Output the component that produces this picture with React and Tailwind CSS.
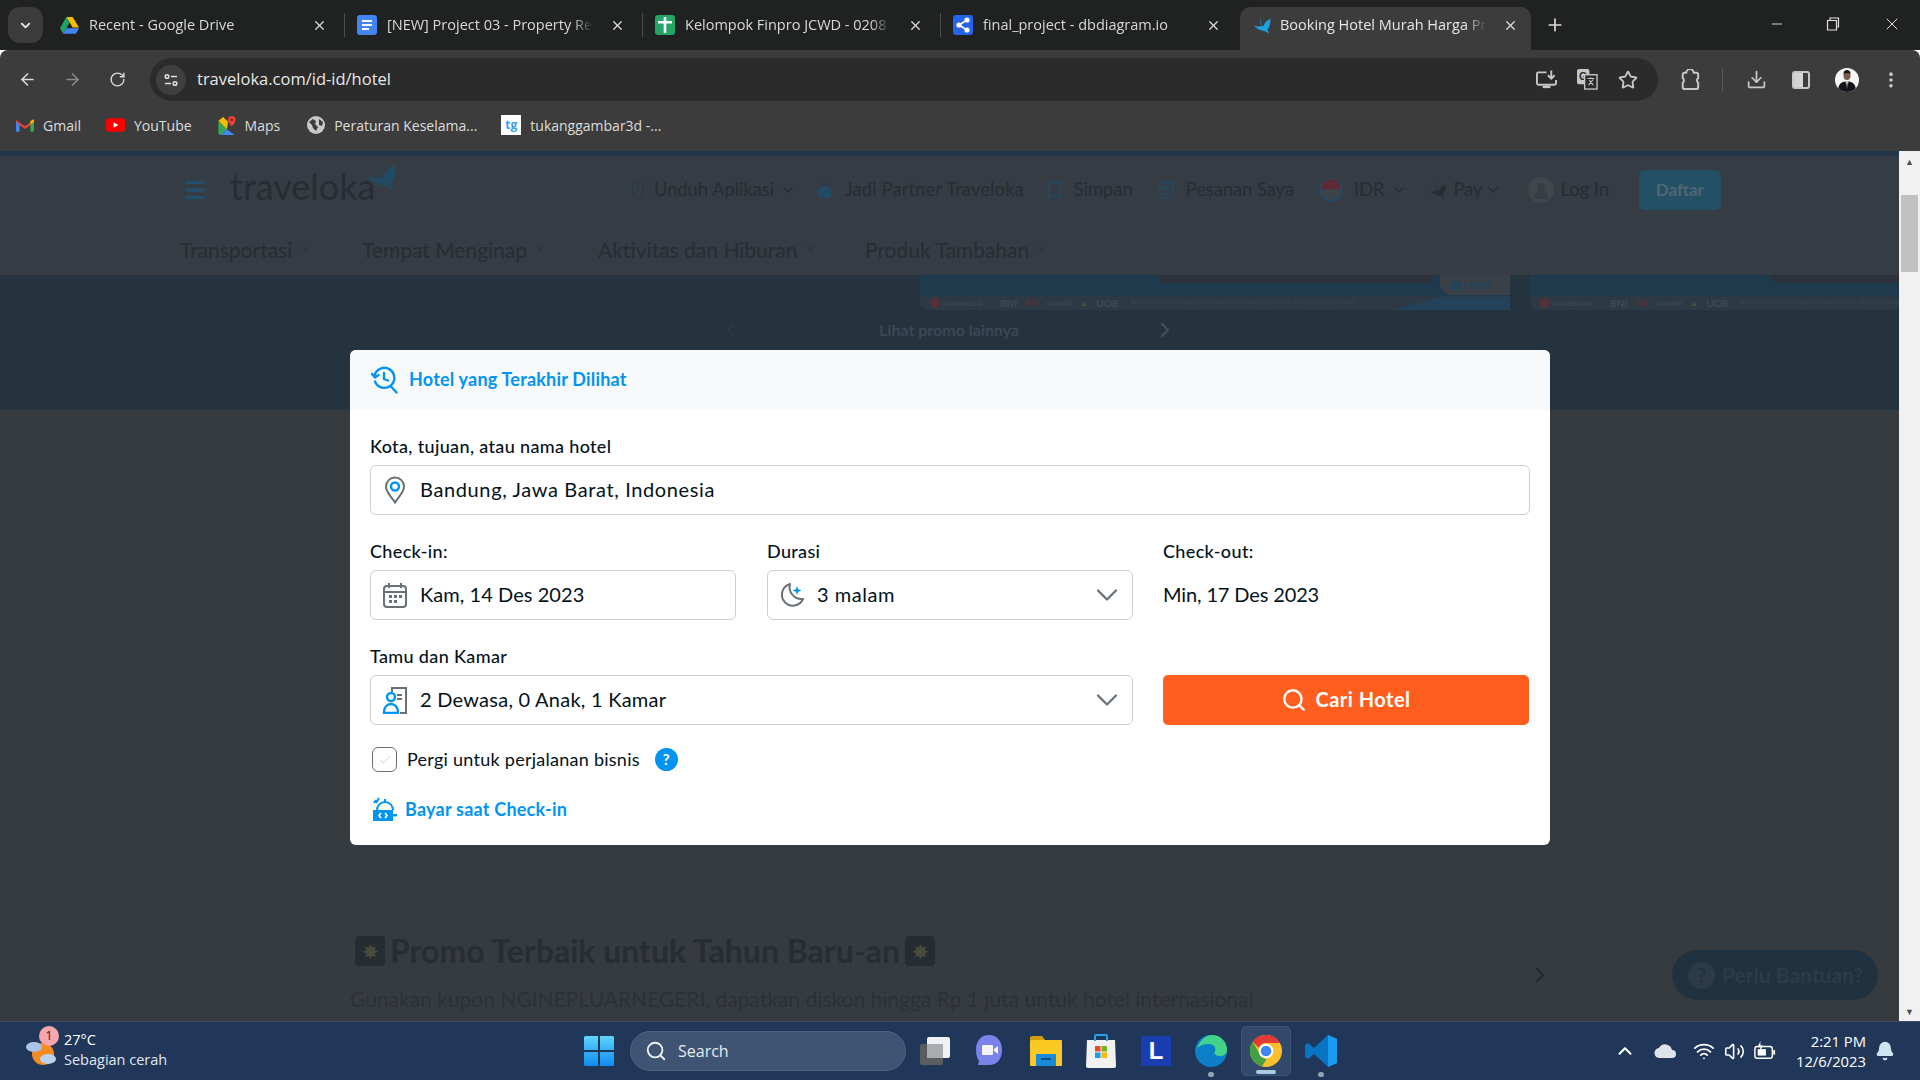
import React from "react";
import { X, Plus, ArrowLeft, ArrowRight, RotateCw, Star, Download, EllipsisVertical, ChevronDown, ChevronUp, ChevronRight, ChevronLeft, Minus, Search, Wifi, Volume2, Bell, Menu, Check } from "lucide-react";

const ui = "font-['Open_Sans',sans-serif]";
const tv = "font-['Lato',sans-serif]";

const Bird = ({ className, fill }) => (
  <svg viewBox="0 0 28 26" className={className}>
    <path fill={fill} d="M11 0C10 6 11 11 15 15C17 9 21 5 27 2C27 10 26 16 22 20L25 26L17 22C11 22 5 19 0 13C5 15 9 15 13 14C10 10 9 5 11 0Z" />
  </svg>
);
const DriveIcon = () => (
  <svg viewBox="0 0 24 22" className="w-[19px] h-[18px] shrink-0">
    <path fill="#fbbc04" d="M8 1h8l8 13h-8z" />
    <path fill="#1fa463" d="M8 1L0 15l4 7 8-14z" />
    <path fill="#4285f4" d="M8 15h16l-4 7H4z" />
  </svg>
);
const DocIcon = ({ color, children }) => (
  <svg viewBox="0 0 20 20" className="w-[20px] h-[20px] shrink-0">
    <rect width="20" height="20" rx="3" fill={color} />
    {children}
  </svg>
);
const Tab = ({ icon, text, active }) => (
  <div className={`h-[43px] flex items-center pl-[11px] pb-[7px] shrink-0 ${active ? "bg-[#3c3c3c] rounded-t-[10px] w-[291px] ml-[2px] pr-[13px]" : "w-[297px] pr-[17px]"}`}>
    <div className="w-[22px] flex justify-center shrink-0">{icon}</div>
    <div className={`w-[206px] overflow-hidden whitespace-nowrap text-[14.5px] [mask-image:linear-gradient(to_right,black_90%,transparent)] ${active ? "ml-[7px] text-[#e6e6e6]" : "ml-[9px] text-[#d8d8d8]"}`}>{text}</div>
    <X className="ml-auto text-[#dcdcdc]" size={15} strokeWidth={2} />
  </div>
);
const Sep = () => <div className="w-px h-[24px] bg-[#4a4d4f] shrink-0 -mt-[7px]" />;

const Bookmark = ({ icon, text, ml }) => (
  <div className={`flex items-center gap-[9px] ${ml}`}>
    {icon}
    <span className="text-[14px] text-[#dcdcdc] whitespace-nowrap">{text}</span>
  </div>
);

const HeadItem = ({ icon, text, ml, chevron, gap = "gap-[12px]", track = "" }) => (
  <div className={`flex items-center ${gap} ${ml} text-[#272d33] text-[18.3px] ${track}`}>
    {icon}
    <span className="whitespace-nowrap">{text}</span>
    {chevron && <ChevronDown size={16} className="text-[#272d33] -ml-[4px]" />}
  </div>
);
const NavItem = ({ text, w }) => (
  <div className={`flex items-center ${w} shrink-0 text-[21px] text-[#272d33]`}>
    <span className="whitespace-nowrap">{text}</span>
    <span className="ml-[8px] text-[10px] text-[#2f3539]">▼</span>
  </div>
);

const Field = ({ icon, text, chevron, className, track }) => (
  <div className={`h-[50px] rounded-[6px] border border-[#cdd0d1] flex items-center pl-[9px] pr-[7px] bg-white ${className}`}>
    <div className="w-[30px] h-[30px] flex items-center justify-center shrink-0">{icon}</div>
    <span className={`ml-[10px] pb-[2px] text-[20px] text-[#03121a] whitespace-nowrap ${track}`}>{text}</span>
    {chevron && <ChevronDown className="ml-auto text-[#687176]" size={36} strokeWidth={1.5} />}
  </div>
);
const Label = ({ children }) => <div className="text-[18px] tracking-[0.35px] font-medium text-[#03121a] h-[22px] leading-[20px] whitespace-nowrap">{children}</div>;

const Logos = ({ wide }) => (
  <div className="h-[14px] bg-[#2d3a45] flex items-center pl-[10px] gap-[8px] text-[8px] text-[#3f4a53] whitespace-nowrap overflow-hidden">
    <span className="w-[10px] h-[10px] rounded-full bg-[#54303a] shrink-0 -mr-[5px]" />
    <span>mastercard</span><span className="ml-[10px] font-bold text-[10px]">BNI</span><span className="text-[#54303a] font-bold">BRI</span><span>mandiri</span><span className="text-[#4f4f3c] font-bold">▲</span><span className="font-bold text-[10px]">UOB</span>
    {wide && <span className="ml-[4px] text-[5px] text-[#3c4650]">Berlaku untuk transaksi dengan kartu kredit dan kartu debit yang terdaftar dalam program promo hotel</span>}
  </div>
);

export default function App() {
  return (
    <div className={`w-[1920px] h-[1080px] overflow-hidden flex flex-col ${ui}`}>
      {/* tab strip */}
      <div className="h-[50px] bg-[#202222] flex items-end shrink-0 relative">
        <div className="w-[35px] h-[36px] ml-[8px] mb-[7px] rounded-[12px] bg-[#3c3c3c] flex items-center justify-center shrink-0">
          <ChevronDown size={15} strokeWidth={3} className="text-[#e8e8e8]" />
        </div>
        <div className="flex items-center ml-[4px]">
          <Tab text="Recent - Google Drive" icon={<DriveIcon />} />
          <Sep />
          <Tab text="[NEW] Project 03 - Property Rental" icon={<DocIcon color="#4285f4"><path fill="#fff" d="M5 5h10v2H5zM5 9h10v2H5zM5 13h7v2H5z" /></DocIcon>} />
          <Sep />
          <Tab text="Kelompok Finpro JCWD - 0208 - Sheet" icon={<DocIcon color="#23a566"><path fill="#fff" d="M3 6h14v2.500H3zM8.700 2h2.600v16H8.700z" /></DocIcon>} />
          <Sep />
          <Tab text="final_project - dbdiagram.io" icon={<DocIcon color="#2563eb"><g fill="#fff"><circle cx="14" cy="5" r="2.600" /><circle cx="6" cy="10" r="2.600" /><circle cx="14" cy="15" r="2.600" /></g><path stroke="#fff" strokeWidth="1.600" d="M14 5L6 10L14 15" fill="none" /></DocIcon>} />
          <Tab active text="Booking Hotel Murah Harga Promo" icon={<Bird className="w-[17px] h-[17px]" fill="#1ba0e2" />} />
        </div>
        <Plus size={20} strokeWidth={2} className="text-[#dcdcdc] ml-[14px] mb-[15px]" />
        <div className="ml-auto flex items-center mb-[16px] text-[#e0e0e0]">
          <Minus size={16} strokeWidth={1.4} />
          <svg viewBox="0 0 14 14" className="w-[14px] h-[14px] ml-[41px]"><path fill="none" stroke="#e0e0e0" strokeWidth="1.2" d="M1.500 3.500h9v9.500h-9zM4 3.500V1h8.500v9H10.500" /></svg>
          <X size={20} strokeWidth={1.2} className="ml-[42px] mr-[18px]" />
        </div>
      </div>
      {/* toolbar */}
      <div className="h-[101px] bg-[#3c3c3c] shrink-0 rounded-tl-[8px] rounded-tr-[8px] flex flex-col">
        <div className="h-[51px] pt-[8px] flex items-start">
          <div className="flex items-center h-[43px] pl-[18px] text-[#d8d8d8]">
            <ArrowLeft size={19} strokeWidth={2} />
            <ArrowRight size={19} strokeWidth={2} className="ml-[26px] text-[#8a8a8a]" />
            <RotateCw size={17} strokeWidth={2} className="ml-[27px]" />
          </div>
          <div className="ml-[24px] w-[1508px] h-[43px] rounded-full bg-[#2b2b2b] flex items-center pl-[6px] pr-[20px]">
            <div className="w-[30px] h-[30px] rounded-full bg-[#3f3f3f] flex items-center justify-center">
              <svg viewBox="0 0 16 16" className="w-[16px] h-[16px]"><g fill="none" stroke="#e0e0e0" strokeWidth="1.500"><circle cx="4" cy="4.500" r="1.800" /><path d="M8 4.500h6M2 11.500h6" /><circle cx="12" cy="11.500" r="1.800" /></g></svg>
            </div>
            <span className="ml-[11px] text-[16.5px] text-[#e8e8e8]">traveloka.com/id-id/hotel</span>
            <div className="ml-auto flex items-center gap-[20px] text-[#c7c7c7]">
              <svg viewBox="0 0 22 20" className="w-[21px] h-[20px]"><path fill="none" stroke="#c7c7c7" strokeWidth="2" d="M11 2H2.500A1.500 1.500 0 0 0 1 3.500v10A1.500 1.500 0 0 0 2.500 15h17a1.500 1.500 0 0 0 1.500-1.500V10" /><path fill="none" stroke="#c7c7c7" strokeWidth="2" d="M16 0v8M12.500 5l3.500 3.500L19.500 5" /><rect x="7" y="16" width="8" height="2.500" fill="#c7c7c7" /></svg>
              <svg viewBox="0 0 22 22" className="w-[21px] h-[21px]"><rect x="0" y="0" width="13" height="16" rx="2" fill="#c7c7c7" /><text x="2" y="12" fontSize="11" fontWeight="700" fontFamily="Liberation Sans, sans-serif" fill="#2b2b2b">G</text><rect x="8" y="6" width="13" height="15" fill="#2b2b2b" stroke="#c7c7c7" strokeWidth="1.400" /><path d="M11 10h7M14.500 9v1.500M12 17l5-6M13 12l4 5" stroke="#c7c7c7" strokeWidth="1.200" fill="none" /></svg>
              <Star size={20} strokeWidth={2.2} />
            </div>
          </div>
          <div className="flex items-center h-[43px] text-[#c7c7c7]">
            <svg viewBox="0 0 22 24" className="w-[20px] h-[22px] ml-[22px]"><path fill="none" stroke="#c7c7c7" strokeWidth="2.200" strokeLinejoin="round" d="M7 4a4 4 0 0 1 8 0h3a2 2 0 0 1 2 2v4a3 3 0 0 0 0 5v5a2 2 0 0 1-2 2H5a2 2 0 0 1-2-2v-5a3 3 0 0 0 0-5V6a2 2 0 0 1 2-2z" /></svg>
            <div className="w-px h-[22px] bg-[#5a5a5a] ml-[22px]" />
            <Download size={21} strokeWidth={2} className="ml-[23px]" />
            <svg viewBox="0 0 18 18" className="w-[18px] h-[18px] ml-[25px]"><rect x="1" y="1" width="16" height="16" rx="2" fill="none" stroke="#c7c7c7" strokeWidth="2" /><rect x="2" y="2" width="9" height="14" fill="#d4d4d4" /></svg>
            <svg viewBox="0 0 24 24" className="w-[24px] h-[24px] ml-[25px]"><defs><clipPath id="av"><circle cx="12" cy="12" r="12" /></clipPath></defs><g clipPath="url(#av)"><rect width="24" height="24" fill="#f6f6f6" /><ellipse cx="12" cy="7.500" rx="3.500" ry="4.500" fill="#7a5a4c" /><path d="M8.500 6c0-3 1.500-4 3.500-4s3.500 1 3.500 4c-2-1.500-5-1.500-7 0z" fill="#1c1614" /><path d="M3 24c0-8 3-10.500 9-10.500S21 16 21 24z" fill="#14131c" /><path d="M10.500 13.500h3l-1.500 7z" fill="#f6f6f6" /><path d="M11.600 14.500h.8l.3 5-.7 1-.7-1z" fill="#2a2030" /></g></svg>
            <EllipsisVertical size={20} strokeWidth={2.4} className="ml-[22px]" />
          </div>
        </div>
        <div className="h-[50px] flex items-center pl-[16px] pb-[2px]">
          <Bookmark text="Gmail" icon={<svg viewBox="0 0 20 15" className="w-[18px] h-[14px]"><path fill="#ea4335" d="M0 2l10 7 10-7v3L10 12 0 5z" /><path fill="#4285f4" d="M0 4l4 3v8H1a1 1 0 0 1-1-1z" /><path fill="#34a853" d="M20 4l-4 3v8h3a1 1 0 0 0 1-1z" /><path fill="#fbbc04" d="M16 3l4-2v3l-4 3z" /></svg>} />
          <Bookmark ml="ml-[25px]" text="YouTube" icon={<svg viewBox="0 0 20 14" className="w-[19px] h-[14px]"><rect width="20" height="14" rx="3" fill="#f00" /><path fill="#fff" d="M8 4l5 3-5 3z" /></svg>} />
          <Bookmark ml="ml-[26px]" text="Maps" icon={<svg viewBox="0 0 18 20" className="w-[18px] h-[19px]"><path fill="#34a853" d="M0 5l9 9-7 6-2-1z" /><path fill="#4285f4" d="M9 14l8 6H2z" /><path fill="#fbbc04" d="M0 5l5-4 5 5-1 8z" /><path fill="#ea4335" d="M14 0a4 4 0 0 1 4 4c0 3-4 7-4 7s-4-4-4-7a4 4 0 0 1 4-4z" /><circle cx="14" cy="4" r="1.300" fill="#7c1a12" /></svg>} />
          <Bookmark ml="ml-[27px]" text="Peraturan Keselama..." icon={<svg viewBox="0 0 18 18" className="w-[18px] h-[18px]"><circle cx="9" cy="9" r="9" fill="#c8c8c8" /><path fill="#3c3c3c" d="M2 6l4-3 3 2-1 3 3 3-2 4-3-3-1-3zM12 3l4 3-1 4-3-1z" /></svg>} />
          <Bookmark ml="ml-[24px]" text="tukanggambar3d -..." icon={<div className="w-[20px] h-[20px] bg-white flex items-center justify-center text-[12px] font-bold text-[#3aa0e8] leading-none">tg</div>} />
        </div>
      </div>

      {/* viewport */}
      <div className="flex-1 flex relative overflow-hidden bg-[#363b40]">
        <div className="w-[1899px] shrink-0 flex flex-col overflow-hidden">
          <div className="h-[5px] bg-[#223649] shrink-0" />
          <div className={`bg-[#363c43] shrink-0 ${tv}`}>
            <div className="h-[68px] flex items-center pl-[184px]">
              <Menu size={26} strokeWidth={3} className="text-[#244d69] -ml-[2px]" />
              <div className="ml-[22px] relative w-[170px] h-[44px] -mt-[6px]">
                <span className="text-[36px] leading-[42px] text-[#272d33]">traveloka</span>
                <Bird className="absolute left-[137px] -top-[3px] w-[30px] h-[28px]" fill="#234a63" />
              </div>
              <HeadItem ml="ml-[232px]" gap="gap-[10px]" chevron text="Unduh Aplikasi" icon={<svg viewBox="0 0 12 18" className="w-[12px] h-[18px]"><rect x="1" y="1" width="10" height="16" rx="2" fill="none" stroke="#2a3a48" strokeWidth="1.500" /><path d="M6 4v6" stroke="#2a3a48" strokeWidth="2" /></svg>} />
              <HeadItem ml="ml-[19px]" gap="gap-[10px]" track="tracking-[0.17px]" text="Jadi Partner Traveloka" icon={<svg viewBox="0 0 20 20" className="w-[20px] h-[20px]"><path fill="#234a63" d="M10 5l8 5-3 8H5l-3-8z" /><path stroke="#2a3a48" strokeWidth="1.500" d="M6 4l2 2M10 2v3M14 4l-2 2" /></svg>} />
              <HeadItem ml="ml-[24px]" text="Simpan" icon={<svg viewBox="0 0 14 18" className="w-[14px] h-[18px]"><path d="M1 1h12v16l-6-4-6 4z" fill="none" stroke="#234a63" strokeWidth="1.500" /><path d="M4 6l5 4M9 6l-5 4" stroke="#2a3a48" strokeWidth="1.200" /></svg>} />
              <HeadItem ml="ml-[26px]" text="Pesanan Saya" icon={<svg viewBox="0 0 16 18" className="w-[15px] h-[18px]"><rect x="1" y="1" width="14" height="16" rx="1.500" fill="none" stroke="#234a63" strokeWidth="1.500" /><path d="M1 6h14M4 9h8M4 13h8" stroke="#234a63" strokeWidth="1.500" /></svg>} />
              <HeadItem ml="ml-[25px]" gap="gap-[11px]" chevron text="IDR" icon={<svg viewBox="0 0 24 24" className="w-[24px] h-[24px]"><circle cx="12" cy="12" r="11" fill="#3e4249" stroke="#234a63" strokeWidth="2" /><path d="M2 11a10 10 0 0 1 20 0z" fill="#5f2a35" /></svg>} />
              <HeadItem ml="ml-[23px]" gap="gap-[7px]" chevron text="Pay" icon={<Bird className="w-[16px] h-[17px]" fill="#272d33" />} />
              <HeadItem ml="ml-[27px]" gap="gap-[6px]" text="Log In" icon={<svg viewBox="0 0 26 26" className="w-[26px] h-[26px]"><circle cx="13" cy="13" r="13" fill="#41464c" /><circle cx="13" cy="10" r="4" fill="#383d42" /><path d="M6 22c0-6 3-8 7-8s7 2 7 8z" fill="#383d42" /></svg>} />
              <div className="ml-[30px] w-[82px] h-[40px] rounded-[6px] bg-[#245066] flex items-center justify-center text-[17px] font-bold text-[#4f6675]">Daftar</div>
            </div>
            <div className="h-[51px] flex items-center pl-[180px]">
              <NavItem text="Transportasi" w="w-[182px]" />
              <NavItem text="Tempat Menginap" w="w-[236px]" />
              <NavItem text="Aktivitas dan Hiburan" w="w-[267px]" />
              <NavItem text="Produk Tambahan" w="w-[200px]" />
            </div>
          </div>
          {/* banner */}
          <div className={`h-[135px] bg-[#25333f] shrink-0 flex flex-col ${tv}`}>
            <div className="h-[35px] flex pl-[920px] gap-[20px]">
              <div className="w-[590px] h-full rounded-bl-[8px] bg-[#203a4d] flex flex-col overflow-hidden relative">
                <div className="h-[21px] relative">
                  <div className="absolute left-[239px] top-0 w-[275px] h-[8px] rounded-b-[8px] bg-[#2c313b]" />
                </div>
                <Logos wide />
                <div className="absolute left-[474px] top-0 w-[116px] h-[35px] bg-[#24425a] [clip-path:polygon(0_100%,40%_62%,100%_62%,100%_100%)]" />
                <div className="absolute left-[520px] top-0 w-[70px] h-[20px] rounded-bl-[12px] bg-[#3a4047] flex items-center pl-[10px] text-[11px] font-bold text-[#23455c]">▦ Hotel</div>
              </div>
              <div className="flex-1 h-full rounded-bl-[8px] bg-[#203a4d] flex flex-col overflow-hidden relative">
                <div className="h-[21px] relative">
                  <div className="absolute left-[240px] top-0 w-[130px] h-[8px] rounded-bl-[8px] bg-[#2c313b]" />
                </div>
                <Logos wide />
              </div>
            </div>
            <div className="flex items-center h-[38px] mt-[1px] pl-[720px]">
              <ChevronLeft size={22} className="text-[#2a3946]" />
              <span className="ml-[137px] text-[16px] font-bold text-[#3a4854] whitespace-nowrap">Lihat promo lainnya</span>
              <ChevronRight size={24} className="ml-[134px] text-[#45525c]" />
            </div>
          </div>
          {/* promo */}
          <div className={`pl-[350px] pt-[516px] shrink-0 ${tv}`}>
            <div className="flex items-center gap-[5px] h-[50px]">
              <div className="ml-[5px] w-[30px] h-[30px] rounded-[4px] bg-[#272c32] flex items-center justify-center text-[#4a4b3a] text-[20px] leading-none">✸</div>
              <span className="text-[32px] font-bold text-[#272d33] whitespace-nowrap">Promo Terbaik untuk Tahun Baru-an</span>
              <div className="w-[30px] h-[30px] rounded-[4px] bg-[#272c32] flex items-center justify-center text-[#4a4b3a] text-[20px] leading-none">✸</div>
            </div>
            <div className="mt-[9px] text-[21px] leading-[28px] text-[#2c3136] whitespace-nowrap">Gunakan kupon NGINEPLUARNEGERI, dapatkan diskon hingga Rp 1 juta untuk hotel internasional</div>
          </div>
        </div>
        {/* scrollbar */}
        <div className="w-[21px] shrink-0 bg-[#f1f1f1] flex flex-col items-center">
          <div className="h-[20px] flex items-center justify-center text-[9px] text-[#505050] leading-none">▲</div>
          <div className="mt-[24px] w-[17px] h-[77px] bg-[#c1c1c1]" />
          <div className="mt-auto h-[20px] flex items-center justify-center text-[9px] text-[#505050] leading-none">▼</div>
        </div>

        {/* floating */}
        <ChevronRight size={26} strokeWidth={2} className="absolute left-[1527px] top-[811px] text-[#22272c]" />
        <div className={`absolute left-[1672px] top-[799px] w-[206px] h-[50px] rounded-full bg-[#203240] flex items-center pl-[16px] ${tv}`}>
          <div className="w-[27px] h-[27px] rounded-full bg-[#2c3b47] flex items-center justify-center text-[20px] font-bold text-[#203240] shrink-0">?</div>
          <span className="ml-[7px] text-[21px] font-bold text-[#2d3b47] whitespace-nowrap">Perlu Bantuan?</span>
        </div>

        {/* modal */}
        <div className={`absolute left-[350px] top-[199px] w-[1200px] h-[495px] rounded-[6px] bg-white overflow-hidden ${tv}`}>
          <div className="h-[60px] bg-[#f7f9fb] flex items-center pl-[21px] pb-[1px]">
            <svg viewBox="0 0 28 28" className="w-[28px] h-[28px]">
              <g fill="none" stroke="#0194f3" strokeWidth="2.400" strokeLinecap="round" strokeLinejoin="round">
                <path d="M3.600 9.500A10 10 0 1 1 4 15.500" />
                <path d="M1 8l3 3.500L7.500 9" />
                <path d="M13 7v6l4 1.500" />
                <path d="M19.500 20l6 6.500" />
              </g>
            </svg>
            <span className="ml-[10px] text-[18px] tracking-[0.2px] font-bold text-[#0194f3] whitespace-nowrap">Hotel yang Terakhir Dilihat</span>
          </div>
          <div className="px-[20px] pt-[26px] flex flex-col">
            <Label>Kota, tujuan, atau nama hotel</Label>
            <Field className="mt-[7px]" track="tracking-[0.63px]" text="Bandung, Jawa Barat, Indonesia" icon={
              <svg viewBox="0 0 24 28" className="w-[24px] h-[28px]"><path d="M12 1.500a9 9 0 0 1 9 9c0 6-6 11-9 16-3-5-9-10-9-16a9 9 0 0 1 9-9z" fill="none" stroke="#687176" strokeWidth="2" /><circle cx="12" cy="10.500" r="4" fill="none" stroke="#0194f3" strokeWidth="2.400" /></svg>
            } />
            <div className="mt-[26px] flex">
              <div className="w-[366px] shrink-0">
                <Label>Check-in:</Label>
                <Field className="mt-[7px]" track="tracking-[0.06px]" text="Kam, 14 Des 2023" icon={
                  <svg viewBox="0 0 26 26" className="w-[26px] h-[26px]"><rect x="2" y="4" width="22" height="21" rx="3" fill="none" stroke="#687176" strokeWidth="2" /><path d="M2 10h22" stroke="#687176" strokeWidth="2" /><path d="M7 1v5M19 1v5" stroke="#687176" strokeWidth="2" /><g fill="#687176"><rect x="7" y="13" width="3" height="3" /><rect x="12" y="13" width="3" height="3" /><rect x="17" y="13" width="3" height="3" /><rect x="7" y="18" width="3" height="3" /><rect x="12" y="18" width="3" height="3" /></g></svg>
                } />
              </div>
              <div className="w-[366px] ml-[31px] shrink-0">
                <Label>Durasi</Label>
                <Field className="mt-[7px]" track="tracking-[0.55px]" chevron text="3 malam" icon={
                  <svg viewBox="0 0 26 26" className="w-[26px] h-[26px]"><path d="M11 2a11 11 0 1 0 13 15 12 12 0 0 1-13-15z" fill="none" stroke="#687176" strokeWidth="2" strokeLinejoin="round" /><path d="M18 4l1.200 3.300L22.500 8.500l-3.300 1.200L18 13l-1.200-3.300L13.500 8.500l3.300-1.200z" fill="#0194f3" /></svg>
                } />
              </div>
              <div className="ml-[30px]">
                <Label>Check-out:</Label>
                <div className="mt-[7px] h-[50px] pb-[2px] flex items-center text-[20px] tracking-[-0.13px] text-[#03121a] whitespace-nowrap">Min, 17 Des 2023</div>
              </div>
            </div>
            <div className="mt-[26px] grid grid-cols-[763px_366px] gap-x-[30px]">
              <div>
                <Label>Tamu dan Kamar</Label>
                <Field className="mt-[7px]" track="tracking-[0.25px]" chevron text="2 Dewasa, 0 Anak, 1 Kamar" icon={
                  <svg viewBox="0 0 26 28" className="w-[26px] h-[28px]"><path d="M10 6V2h14v25h-6" fill="none" stroke="#687176" strokeWidth="2" /><path d="M15 9h5M15 13h5" stroke="#687176" strokeWidth="2" /><circle cx="9" cy="11" r="4" fill="none" stroke="#0194f3" strokeWidth="2.400" /><path d="M2 27c0-6 3-9 7-9s7 3 7 9z" fill="none" stroke="#0194f3" strokeWidth="2.400" /></svg>
                } />
              </div>
              <div className="pt-[29px]">
                <div className="h-[50px] rounded-[5px] bg-[#ff5e1f] flex items-center justify-center gap-[8px] text-white text-[20px] tracking-[0.5px] font-bold">
                  <Search size={26} strokeWidth={2.2} />
                  <span className="pb-[2px]">Cari Hotel</span>
                </div>
              </div>
            </div>
            <div className="mt-[22px] flex items-center h-[25px] pl-[2px]">
              <div className="w-[25px] h-[25px] rounded-[6px] border border-[#687176] flex items-center justify-center">
                <Check size={14} strokeWidth={1.6} className="text-[#cdd0d1]" />
              </div>
              <span className="ml-[10px] text-[18px] tracking-[0.26px] text-[#03121a] whitespace-nowrap">Pergi untuk perjalanan bisnis</span>
              <div className="ml-[15px] w-[23px] h-[23px] rounded-full bg-[#0194f3] flex items-center justify-center text-white font-bold text-[15px] leading-none">?</div>
            </div>
            <div className="mt-[24px] flex items-center h-[26px] pl-[2px]">
              <svg viewBox="0 0 26 26" className="w-[26px] h-[26px] shrink-0">
                <g fill="none" stroke="#0194f3" strokeWidth="2">
                  <path d="M5 14a8 8 0 0 1 16 0" />
                  <path d="M13 6V3" />
                  <path d="M4 4l-2 3M7 2L4 7" />
                </g>
                <rect x="1" y="14" width="20" height="11" fill="#0194f3" />
                <rect x="21" y="18" width="4" height="2.400" fill="#0194f3" />
                <path d="M9 17l-2 2.500L9 22M13 17l2 2.500L13 22" stroke="#fff" strokeWidth="1.600" fill="none" />
              </svg>
              <span className="ml-[7px] text-[18px] tracking-[0.22px] font-bold text-[#0194f3] whitespace-nowrap">Bayar saat Check-in</span>
            </div>
          </div>
        </div>
      </div>

      {/* taskbar */}
      <div className="h-[59px] bg-[#20375a] border-t border-[#3d4c60] shrink-0 flex items-center text-white relative">
        <div className="w-[584px] flex items-center pl-[24px] shrink-0">
          <div className="relative w-[34px] h-[34px]">
            <svg viewBox="0 0 34 34" className="w-[34px] h-[34px]"><circle cx="19" cy="20" r="11" fill="#f58a1f" /><ellipse cx="10" cy="13" rx="8" ry="5" fill="#a9c4ea" /><ellipse cx="24" cy="25" rx="8" ry="5" fill="#bcd3f0" /></svg>
            <div className="absolute left-[15px] -top-[8px] w-[20px] h-[20px] rounded-full bg-[#f8a6ad] flex items-center justify-center text-[13px] text-[#3a1a1e]">1</div>
          </div>
          <div className="ml-[6px] flex flex-col text-[14.5px] leading-[20px] -mt-[2px]">
            <span>27°C</span>
            <span className="text-[#e0e6ee]">Sebagian cerah</span>
          </div>
        </div>
        <svg viewBox="0 0 30 30" className="w-[30px] h-[30px] shrink-0"><defs><linearGradient id="w" x1="0" y1="0" x2="0" y2="1"><stop offset="0" stopColor="#5fd4fb" /><stop offset="1" stopColor="#0f8cf5" /></linearGradient></defs><path fill="url(#w)" d="M0 1.500A1.500 1.500 0 0 1 1.500 0H14v14H0zM16 0h12.500A1.500 1.500 0 0 1 30 1.500V14H16zM0 16h14v14H1.500A1.500 1.500 0 0 1 0 28.500zM16 16h14v12.500a1.500 1.500 0 0 1-1.500 1.500H16z" /></svg>
        <div className="ml-[16px] w-[276px] h-[40px] rounded-full bg-[#3e5472] border border-[#4e627e] flex items-center pl-[14px] shrink-0">
          <Search size={22} strokeWidth={2} className="text-[#eef2f6]" />
          <span className="ml-[11px] text-[16px] text-[#e6ebf1]">Search</span>
        </div>
        <div className="relative ml-[14px] w-[30px] h-[28px] shrink-0">
          <div className="absolute left-0 top-[7px] w-[23px] h-[21px] bg-[#5a5c60] rounded-[2px]" />
          <div className="absolute left-[7px] top-0 w-[23px] h-[21px] bg-[#f0f1f3] rounded-[2px]" />
          <div className="absolute left-[7px] top-[7px] w-[16px] h-[14px] bg-[#a9abae]" />
        </div>
        <div className="ml-[25px] shrink-0">
          <svg viewBox="0 0 28 34" className="w-[28px] h-[34px]"><path d="M14 1c8 0 13 6 13 15s-5 15-13 15H3l1-4C2 24 1 20 1 16 1 7 6 1 14 1z" fill="#7b83eb" /><path d="M8 11h9a1 1 0 0 1 1 1v8a1 1 0 0 1-1 1H8a1 1 0 0 1-1-1v-8a1 1 0 0 1 1-1zM19 15l4-3v8l-4-3z" fill="#f3f3fb" /></svg>
        </div>
        <div className="ml-[27px] shrink-0">
          <svg viewBox="0 0 32 30" className="w-[32px] h-[30px]"><path d="M0 2a2 2 0 0 1 2-2h10l3 4h-15z" fill="#d49d08" /><rect y="4" width="32" height="26" rx="1" fill="#fcc924" /><rect x="6" y="18" width="20" height="12" fill="#1a8bd9" /><rect x="11" y="22" width="10" height="2" fill="#0b4e88" /></svg>
        </div>
        <div className="ml-[24px] shrink-0">
          <svg viewBox="0 0 30 34" className="w-[30px] h-[34px]"><path d="M1 6h28l1 26a2 2 0 0 1-2 2H2a2 2 0 0 1-2-2z" fill="#f1f1f1" /><path d="M9 7V2a1 1 0 0 1 1-1h10a1 1 0 0 1 1 1v5" fill="none" stroke="#29a0e8" strokeWidth="2" /><rect x="9" y="12" width="5.500" height="5.500" fill="#e84a2a" /><rect x="15.500" y="12" width="5.500" height="5.500" fill="#7ab41d" /><rect x="9" y="18.500" width="5.500" height="5.500" fill="#1aa0e8" /><rect x="15.500" y="18.500" width="5.500" height="5.500" fill="#fcb900" /></svg>
        </div>
        <div className="ml-[25px] w-[30px] h-[30px] bg-[#1a3db0] flex items-center justify-center text-[24px] font-bold text-white shrink-0 font-['Liberation_Sans',sans-serif]">L</div>
        <div className="ml-[24px] relative shrink-0 w-[32px] h-[32px]">
          <svg viewBox="0 0 32 32" className="w-[32px] h-[32px]"><circle cx="16" cy="16" r="16" fill="#0c7fc9" /><path d="M2 14C5 4 12 0 17 0c8 0 15 6 15 15 0 4-3 6-7 6-3 0-5-1-6-3 3-3 1-9-5-9-6 0-10 2-12 5z" fill="#42d28a" /><path d="M11 20c0 6 6 10 13 8-5 1-12 0-13-8z" fill="#1b5fa8" /></svg>
          <div className="absolute left-[13px] top-[37px] w-[6px] h-[5px] rounded-full bg-[#94a3b5]" />
        </div>
        <div className="ml-[14px] relative shrink-0 w-[50px] h-[50px] rounded-[5px] bg-[#33496a] border border-[#3e5474] flex items-center justify-center">
          <svg viewBox="0 0 48 48" className="w-[32px] h-[32px]"><circle cx="24" cy="24" r="24" fill="#fbc02d" /><path d="M24 0a24 24 0 0 1 21 12H24a12 12 0 0 0-11 7L4 10A24 24 0 0 1 24 0z" fill="#e53935" /><path d="M4 10l11 19a12 12 0 0 0 10 7l-7 11A24 24 0 0 1 4 10z" fill="#43a047" /><circle cx="24" cy="24" r="11" fill="#fff" /><circle cx="24" cy="24" r="8" fill="#4285f4" /></svg>
          <div className="absolute left-[14px] bottom-[1px] w-[20px] h-[4px] rounded-full bg-[#a8cbe6]" />
        </div>
        <div className="ml-[14px] relative shrink-0 w-[32px] h-[32px]">
          <svg viewBox="0 0 32 32" className="w-[32px] h-[32px]"><path fill="#0a74c4" d="M23 0l9 4v24l-9 4L9 19l-6 5-3-2v-12l3-2 6 5z" /><path fill="#1a9cf0" d="M23 0l9 4v24l-9 4zM23 9l-8 7 8 7z" /><path fill="#0a74c4" d="M23 9l-8 7 8 7z" /></svg>
          <div className="absolute left-[13px] top-[37px] w-[6px] h-[5px] rounded-full bg-[#94a3b5]" />
        </div>
        <div className="ml-auto flex items-center pr-[25px]">
          <ChevronUp size={22} strokeWidth={2.2} />
          <svg viewBox="0 0 22 16" className="w-[22px] h-[16px] ml-[18px]"><path d="M6 15a5 5 0 0 1-1-10 7 7 0 0 1 13 2 4 4 0 0 1 0 8z" fill="#dfe4ea" /></svg>
          <Wifi size={22} strokeWidth={2} className="ml-[17px]" />
          <Volume2 size={21} strokeWidth={1.8} className="ml-[9px]" />
          <svg viewBox="0 0 24 22" className="w-[22px] h-[22px] ml-[9px]"><rect x="1" y="6" width="19" height="13" rx="2.500" fill="none" stroke="#fff" strokeWidth="1.600" /><rect x="4" y="9" width="9" height="7" fill="#fff" /><rect x="21" y="10" width="2" height="5" fill="#fff" /><path d="M7 0L4 7h3l-1 5 4-7H7z" fill="#fff" /></svg>
          <div className="ml-[18px] w-[72px] text-[14.8px] leading-[20px] whitespace-nowrap flex flex-col items-end">
            <span>2:21 PM</span>
            <span>12/6/2023</span>
          </div>
          <Bell size={20} fill="#cfe6f2" stroke="#cfe6f2" className="ml-[9px]" />
        </div>
      </div>
    </div>
  );
}
